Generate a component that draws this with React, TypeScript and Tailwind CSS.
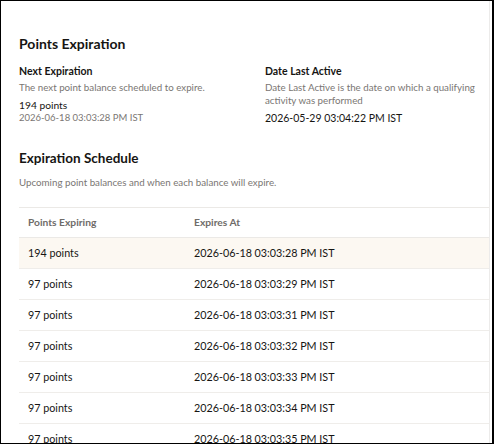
const rows = [
  { points: '194 points', at: '2026-06-18 03:03:28 PM IST', active: true },
  { points: '97 points', at: '2026-06-18 03:03:29 PM IST' },
  { points: '97 points', at: '2026-06-18 03:03:31 PM IST' },
  { points: '97 points', at: '2026-06-18 03:03:32 PM IST' },
  { points: '97 points', at: '2026-06-18 03:03:33 PM IST' },
  { points: '97 points', at: '2026-06-18 03:03:34 PM IST' },
  { points: '97 points', at: '2026-06-18 03:03:35 PM IST' },
];

export default function App() {
  return (
    <div className="h-[444px] w-[494px] overflow-hidden border-y border-l border-r-2 border-black bg-white font-['Lato',sans-serif] text-[#161513]">
      <div className="flex h-full">
        <div className="flex-1 overflow-hidden pl-[18px] pt-[33px]">
          <h2 className="text-[14px] font-bold leading-5">Points Expiration</h2>
          <div className="mt-[9px] grid grid-cols-[246px_1fr]">
            <div>
              <div className="text-[10.5px] font-bold leading-4">Next Expiration</div>
              <div className="mt-[2px] text-[9.75px] leading-[13px] text-[#7a7673]">
                The next point balance scheduled to expire.
              </div>
              <div className="mt-[5px] text-[10.25px] leading-[13px]">194 points</div>
              <div className="text-[9.5px] leading-[12px] text-[#7a7673]">2026-06-18 03:03:28 PM IST</div>
            </div>
            <div>
              <div className="text-[10.5px] font-bold leading-4">Date Last Active</div>
              <div className="mt-[2px] w-[214px] text-[9.75px] leading-[13px] text-[#7a7673]">
                Date Last Active is the date on which a qualifying activity was performed
              </div>
              <div className="mt-[4px] text-[10.5px] leading-[14px]">2026-05-29 03:04:22 PM IST</div>
            </div>
          </div>
          <h2 className="mt-[23px] text-[13.5px] font-bold leading-5">Expiration Schedule</h2>
          <div className="mt-[7px] text-[9.75px] leading-[14px] text-[#7a7673]">
            Upcoming point balances and when each balance will expire.
          </div>
          <div className="mt-[18px] border-t border-[#ebe9e6]">
            <div className="flex h-[30px] items-center border-b border-[#ebe9e6] text-[10.25px] font-bold text-[#6f6c69]">
              <div className="w-[175px] pl-[9px]">Points Expiring</div>
              <div>Expires At</div>
            </div>
            {rows.map((r, i) => (
              <div
                key={i}
                className={`flex h-[31px] items-center border-b border-[#efedea] text-[10.75px] ${
                  r.active ? 'bg-[#fcf8f2]' : ''
                }`}
              >
                <div className="w-[175px] pl-[9px]">{r.points}</div>
                <div>{r.at}</div>
              </div>
            ))}
          </div>
        </div>
        <div className="w-[3px] border-l border-[#ecebea] bg-white" />
      </div>
    </div>
  );
}
